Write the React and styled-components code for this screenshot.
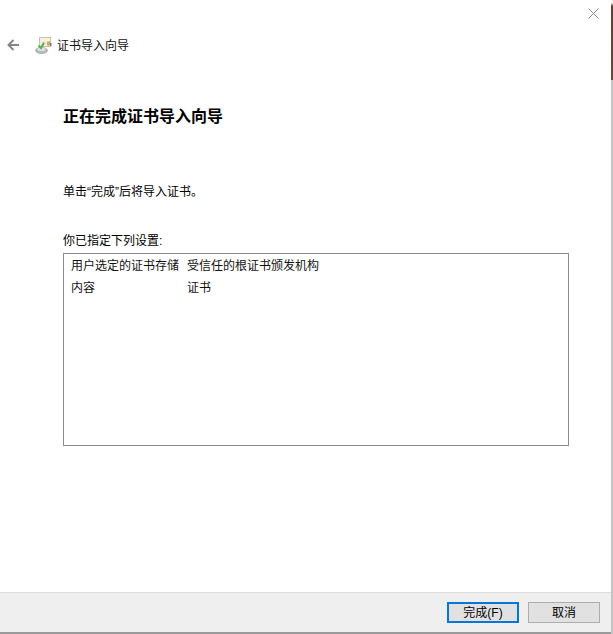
import React from "react";
import styled, { createGlobalStyle } from "styled-components";

const FONT = `"Liberation Sans", "Noto Sans CJK SC", sans-serif`;

const Global = createGlobalStyle`
  html, body { margin: 0; padding: 0; background: #fff; }
  body { font-family: ${FONT}; font-size: 12px; color: #000; }
`;
const Page = styled.div`
  width: 613px; height: 634px; display: flex; overflow: hidden; background: #fff;
`;
const Wizard = styled.div`
  width: 611px; display: flex; flex-direction: column;
`;
const EdgeStrip = styled.div`
  width: 2px; display: flex; flex-direction: column;
`;
const EdgeDark = styled.div`
  height: 80px; background: linear-gradient(#f4f2f0 0, #f4f2f0 3px, #5e4034 6px, #6b4a3b 100%);
`;
const EdgeLight = styled.div`
  flex: 1; background: #c4c4c4;
`;
const TitleBar = styled.div`
  height: 30px; flex: none; display: flex; justify-content: flex-end; align-items: flex-start;
  padding: 8px 12px 0 0; box-sizing: border-box;
`;
const NavRow = styled.div`
  height: 30px; flex: none; display: flex; align-items: center; padding-left: 6px;
`;
const BackButton = styled.div`
  width: 15px; height: 14px; display: flex; margin-right: 14px;
`;
const AppIcon = styled.div`
  width: 17px; height: 17px; margin-right: 5px; display: flex;
`;
const NavTitle = styled.span`
  font-size: 12px; line-height: 16px; color: #111; padding-top: 2px;
`;
const Content = styled.main`
  flex: 1; display: flex; flex-direction: column; padding: 0 42px 0 63px; min-height: 0;
`;
const Heading = styled.h1`
  margin: 46px 0 0; font-size: 16px; line-height: 22px; font-weight: 700; color: #000;
`;
const Lead = styled.p`
  margin: 55px 0 0; line-height: 18px; font-size: 12px;
`;
const Label = styled.p`
  margin: 31px 0 0; line-height: 18px; font-size: 12px;
`;
const SummaryBox = styled.div`
  box-sizing: border-box; height: 193px; width: 506px; margin-top: 3px; border: 1px solid #8a8a92;
  padding: 1px 0 0 7px; display: grid; grid-template-columns: 116px 1fr; grid-auto-rows: 22px; align-items: center;
`;
const Cell = styled.span`
  font-size: 12px; line-height: 18px; color: #111;
`;
const Footer = styled.footer`
  flex: none; height: 42px; box-sizing: border-box; background: #efefef; border-top: 1px solid #dcdcdc;
  border-bottom: 2px solid #9a9a9a; display: flex; justify-content: flex-end; align-items: flex-start;
  gap: 9px; padding: 9px 11px 0 0;
`;
const Button = styled.button`
  width: 72px; height: 21px; box-sizing: border-box; padding: 0; margin: 0; background: #e1e1e1;
  border: ${(p) => (p.$primary ? "2px solid #0078d7" : "1px solid #adadad")};
  font: 12px/16px ${FONT}; color: #000;
`;

const CloseIcon = () => (
  <svg width="11" height="11" viewBox="0 0 11 11"><path d="M.5.5l10 10M10.5.5l-10 10" stroke="#8a8a8a" strokeWidth="1" fill="none" /></svg>
);
const BackIcon = () => (
  <svg width="15" height="14" viewBox="0 0 15 14"><path d="M13 7H2.5M7.5 2 2.5 7l5 5" stroke="#858585" strokeWidth="2" fill="none" /></svg>
);
const CertIcon = () => (
  <svg width="17" height="17" viewBox="0 0 17 17">
    <rect x="4.5" y=".5" width="11" height="9" fill="#f4f0e2" stroke="#c9c4b0" />
    <rect x="12" y="4.5" width="3" height="4" fill="#e3a52b" />
    <rect x="15" y="6" width="1.5" height="3" fill="#3d7fd0" />
    <ellipse cx="6.5" cy="13.5" rx="6" ry="3" fill="#b9bcbc" stroke="#8d9090" strokeWidth=".6" />
    <ellipse cx="6.5" cy="12.3" rx="4" ry="1.6" fill="#e4e6e6" />
    <path d="M3.5 8.5 6 11l3-5.5" stroke="#5ab04f" strokeWidth="2" fill="none" />
  </svg>
);

export default function App() {
  return (
    <Page>
      <Global />
      <Wizard>
        <TitleBar><CloseIcon /></TitleBar>
        <NavRow>
          <BackButton><BackIcon /></BackButton>
          <AppIcon><CertIcon /></AppIcon>
          <NavTitle>证书导入向导</NavTitle>
        </NavRow>
        <Content>
          <Heading>正在完成证书导入向导</Heading>
          <Lead>单击“完成”后将导入证书。</Lead>
          <Label>你已指定下列设置:</Label>
          <SummaryBox>
            <Cell>用户选定的证书存储</Cell>
            <Cell>受信任的根证书颁发机构</Cell>
            <Cell>内容</Cell>
            <Cell>证书</Cell>
          </SummaryBox>
        </Content>
        <Footer>
          <Button $primary>完成(F)</Button>
          <Button>取消</Button>
        </Footer>
      </Wizard>
      <EdgeStrip>
        <EdgeDark />
        <EdgeLight />
      </EdgeStrip>
    </Page>
  );
}
